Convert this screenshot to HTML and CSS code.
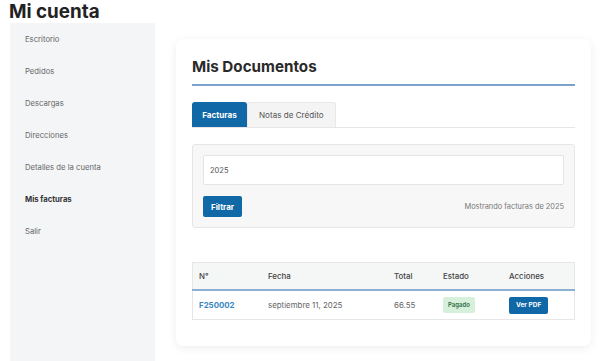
FILE: index.html
```html
<!DOCTYPE html>
<html lang="es">
<head>
<meta charset="UTF-8" />
<meta name="viewport" content="width=device-width, initial-scale=1" />
<title>Mi cuenta</title>
<link rel="stylesheet" href="styles.css">
</head>
<body>

<h1 class="page-title">Mi cuenta</h1>

<div class="account">
  <nav class="account-nav">
    <a href="#">Escritorio</a>
    <a href="#">Pedidos</a>
    <a href="#">Descargas</a>
    <a href="#">Direcciones</a>
    <a href="#">Detalles de la cuenta</a>
    <a href="#" class="active">Mis facturas</a>
    <a href="#">Salir</a>
  </nav>

  <div class="account-content">
    <div class="card">
      <h2 class="card-title">Mis Documentos</h2>

      <div class="tabs">
        <button class="tab active">Facturas</button>
        <button class="tab">Notas de Crédito</button>
      </div>

      <div class="filter-box">
        <input class="year-input" type="text" value="2025" />
        <div class="filter-row">
          <button class="btn">Filtrar</button>
          <span class="filter-info">Mostrando facturas de 2025</span>
        </div>
      </div>

      <table class="docs">
        <thead>
          <tr>
            <th class="c-num">N°</th>
            <th class="c-date">Fecha</th>
            <th class="c-total">Total</th>
            <th class="c-state">Estado</th>
            <th>Acciones</th>
          </tr>
        </thead>
        <tbody>
          <tr>
            <td><a href="#" class="doc-link">F250002</a></td>
            <td>septiembre 11, 2025</td>
            <td>66.55</td>
            <td><span class="badge">Pagado</span></td>
            <td><button class="btn btn-sm">Ver PDF</button></td>
          </tr>
        </tbody>
      </table>
    </div>
  </div>
</div>

</body>
</html>
```

FILE: styles.css
```css
html, body {
  margin: 0; padding: 0; height: 100%;
  font-family: Inter, "Noto Sans", Arial, sans-serif;
  background: #fff; color: #444;
}
.page-title {
  margin: 0 0 0 9px; font-size: 18.8px; line-height: 23px;
  font-weight: 700; color: #222;
}
.account {
  display: flex; padding-left: 10px; height: calc(100% - 23px);
}
.account-nav {
  width: 145px; flex: none; background: #f4f5f7;
  display: flex; flex-direction: column; padding-top: 1px;
}
.account-nav a {
  display: block; height: 32px; line-height: 32px;
  padding-left: 15px; font-size: 7.7px; color: #666; text-decoration: none;
}
.account-nav a.active {
  font-weight: 700; color: #333;
}
.account-content {
  margin-left: 21px; margin-top: 16px; width: 415px;
}
.card {
  background: #fff; border-radius: 7px;
  box-shadow: 0 2px 10px rgba(0,0,0,0.07);
  padding: 16px 16px 26px;
}
.card-title {
  margin: 0; font-size: 15.2px; line-height: 24px; font-weight: 700;
  color: #2a2a2a; padding-bottom: 5px;
  border-bottom: 2px solid #7aa3cc;
}
.tabs {
  display: flex; margin-top: 16px; border-bottom: 1px solid #e6e6e6;
}
.tab {
  font-family: inherit; font-size: 8.1px; height: 25px; border: 1px solid #e8e8e8;
  border-bottom: none; background: #f4f4f4; color: #555; padding: 0 11px;
  border-radius: 3px 3px 0 0; cursor: pointer;
}
.tab.active {
  background: #1068a6; color: #fff; font-weight: 700; border-color: #1068a6;
  width: 55px; padding: 0;
}
.filter-box {
  margin-top: 16px; background: #f7f7f7; border: 1px solid #e6e6e6;
  border-radius: 3px; padding: 10px;
}
.year-input {
  display: block; box-sizing: border-box; width: 100%; height: 30px;
  border: 1px solid #e4e4e4; border-radius: 2px; background: #fff;
  padding: 0 6px; font-family: inherit; font-size: 7.5px; color: #555;
}
.filter-row {
  display: flex; align-items: center; justify-content: space-between;
  margin-top: 11px;
}
.btn {
  font-family: inherit; background: #1068a6; color: #fff; border: none;
  border-radius: 2px; font-weight: 700; font-size: 8px; height: 21px;
  padding: 0 8px; cursor: pointer; white-space: nowrap;
}
.btn-sm {
  font-size: 6.5px; height: 17px; padding: 0 7px;
}
.filter-info {
  font-size: 7.4px; color: #777;
}
.docs {
  margin-top: 34px; width: 100%; border-collapse: collapse;
  border: 1px solid #e6e6e6; font-size: 7.9px;
}
.docs th {
  text-align: left; font-weight: 500; color: #444; background: #f5f7f7;
  height: 26px; padding: 0 6px; border-bottom: 2px solid #8cb0d2;
}
.docs td {
  height: 28px; padding: 0 6px; color: #666;
}
.c-num { width: 57px; }
.c-date { width: 114px; }
.c-total { width: 37px; }
.c-state { width: 54px; }
.doc-link {
  color: #3a86c4; font-weight: 700; text-decoration: none;
}
.badge {
  display: inline-block; background: #d7f0dc; color: #2d6b3c;
  font-size: 6px; font-weight: 600; padding: 0 5px; height: 16px;
  line-height: 16px; border-radius: 2px;
}
```
